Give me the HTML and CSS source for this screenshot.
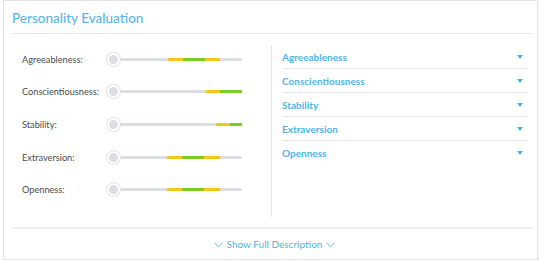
FILE: index.html
```html
<!DOCTYPE html>
<html>
<head>
<meta charset="utf-8">
<link rel="stylesheet" href="styles.css">
</head>
<body>
<div class="card">
  <div class="card-header"><h1 class="title">Personality Evaluation</h1></div>
  <div class="card-body">
    <div class="scores">
      <div class="row">
        <span class="label">Agreeableness:</span>
        <div class="slider"><span class="knob"></span>
          <div class="track"><span class="gap" style="width:54.5px"></span><span class="seg yellow" style="width:15px"></span><span class="seg green" style="width:22.5px"></span><span class="seg yellow" style="width:15px"></span></div>
        </div>
      </div>
      <div class="row">
        <span class="label">Conscientiousness:</span>
        <div class="slider"><span class="knob"></span>
          <div class="track"><span class="gap" style="width:92.5px"></span><span class="seg yellow" style="width:14.5px"></span><span class="seg green" style="width:22px"></span></div>
        </div>
      </div>
      <div class="row">
        <span class="label">Stability:</span>
        <div class="slider"><span class="knob"></span>
          <div class="track"><span class="gap" style="width:103px"></span><span class="seg yellow" style="width:14px"></span><span class="seg green" style="width:12px"></span></div>
        </div>
      </div>
      <div class="row">
        <span class="label">Extraversion:</span>
        <div class="slider"><span class="knob"></span>
          <div class="track"><span class="gap" style="width:54px"></span><span class="seg yellow" style="width:15px"></span><span class="seg green" style="width:22px"></span><span class="seg yellow" style="width:16px"></span></div>
        </div>
      </div>
      <div class="row">
        <span class="label">Openness:</span>
        <div class="slider"><span class="knob"></span>
          <div class="track"><span class="gap" style="width:54px"></span><span class="seg yellow" style="width:15px"></span><span class="seg green" style="width:22px"></span><span class="seg yellow" style="width:16px"></span></div>
        </div>
      </div>
    </div>
    <div class="traits">
      <div class="trait"><span>Agreeableness</span><span class="caret"></span></div>
      <div class="trait"><span>Conscientiousness</span><span class="caret"></span></div>
      <div class="trait"><span>Stability</span><span class="caret"></span></div>
      <div class="trait"><span>Extraversion</span><span class="caret"></span></div>
      <div class="trait"><span>Openness</span><span class="caret"></span></div>
    </div>
  </div>
  <div class="card-footer">
    <svg class="chev" width="9" height="6" viewBox="0 0 9 6"><path d="M0.5 0.8 L4.5 4.8 L8.5 0.8" fill="none" stroke="#5ab6e8" stroke-width="1"/></svg>
    <span class="more">Show Full Description</span>
    <svg class="chev" width="9" height="6" viewBox="0 0 9 6"><path d="M0.5 0.8 L4.5 4.8 L8.5 0.8" fill="none" stroke="#5ab6e8" stroke-width="1"/></svg>
  </div>
</div>
</body>
</html>
```
FILE: styles.css
```css
* { box-sizing: border-box; }
html, body { margin: 0; padding: 0; background: #fff; }
body { font-family: Lato, "Noto Sans", sans-serif; color: #444; }

.card {
  margin-left: 3px;
  width: 535px;
  height: 260px;
  border: 1px solid #e4e4e4;
  padding: 0 4px 0 8px;
  display: flex;
  flex-direction: column;
  box-shadow: 1px 1px 1px rgba(0,0,0,0.04);
}

.card-header {
  height: 33px;
  border-bottom: 1px solid #e8e8e8;
  display: flex;
  align-items: center;
}
.title {
  margin: 0;
  font-size: 13.5px;
  font-weight: 500;
  color: #58b8ea;
  letter-spacing: 0;
  line-height: 16px;
  padding-top: 1px;
}

.card-body {
  padding: 10px 0;
  display: grid;
  grid-template-columns: 259px 1fr;
}

.scores {
  height: 173px;
  margin-top: -1px;
}
.row {
  height: 32.6px;
  display: flex;
  align-items: center;
  padding-left: 10px;
}
.label {
  flex: 0 0 85px;
  font-size: 9.2px;
  color: #4a4a4a;
}
.slider {
  position: relative;
  width: 135px;
  display: flex;
  align-items: center;
}
.knob {
  position: absolute;
  left: 0;
  top: 50%;
  width: 13px;
  height: 13px;
  margin-top: -6.5px;
  border-radius: 50%;
  background: #dcdde1;
  border: 2px solid #fff;
  box-shadow: 0 0 0 1px #e2e3e6;
}
.track {
  margin-left: 6px;
  flex: 1;
  height: 3px;
  border-radius: 2px;
  background: #dcdde2;
  display: flex;
}
.gap, .seg { display: block; height: 3px; }
.yellow { background: #f6c719; }
.green { background: #7ccd22; }

.traits {
  height: 172px;
  margin-top: 1px;
  border-left: 1px solid #e6e6e6;
  padding: 0 6px 0 10px;
}
.trait {
  height: 24px;
  display: flex;
  align-items: center;
  justify-content: space-between;
  border-bottom: 1px solid #e8e8e8;
  font-size: 10px;
  font-weight: 700;
  color: #52b3e8;
}
.trait:last-child { border-bottom: none; }
.caret {
  width: 0;
  height: 0;
  margin-right: 4px;
  border-left: 3px solid transparent;
  border-right: 3px solid transparent;
  border-top: 4px solid #4aaee8;
}

.card-footer {
  border-top: 2px solid #eeeeee;
  flex: 1;
  display: flex;
  align-items: center;
  justify-content: center;
  gap: 4px;
  padding-left: 4px;
}
.more {
  font-size: 10px;
  color: #52b3e8;
}
.chev { display: block; margin-top: 1px; }
```
